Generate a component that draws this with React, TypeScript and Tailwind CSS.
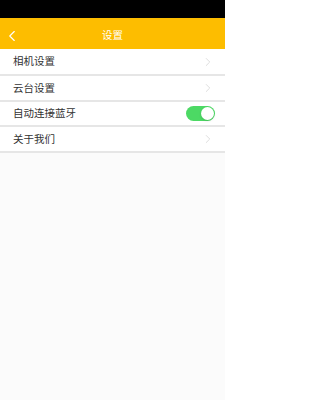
import { ChevronLeft, ChevronRight } from "lucide-react";

const rows = [
  { label: "相机设置", kind: "link", h: "h-[27px]" },
  { label: "云台设置", kind: "link", h: "h-[26px]" },
  { label: "自动连接蓝牙", kind: "toggle", h: "h-[25px]" },
  { label: "关于我们", kind: "link", h: "h-[26px]" },
];

function Toggle() {
  return (
    <div className="w-[29px] h-[15px] rounded-full bg-[#4cd964] flex items-center justify-end px-[1px]">
      <div className="w-[13px] h-[13px] rounded-full bg-white shadow-sm" />
    </div>
  );
}

export default function App() {
  return (
    <div
      className="w-[225px] h-[400px] bg-[#fbfbfb] flex flex-col"
      style={{ fontFamily: '"Noto Sans CJK SC", "Noto Sans", sans-serif' }}
    >
      {/* status bar */}
      <div className="h-[18px] bg-black" />

      {/* header */}
      <header className="h-[31px] pt-[4px] bg-[#fdbd00] relative flex items-center justify-center">
        <ChevronLeft className="absolute left-[3px] w-[18px] h-[18px] text-white" strokeWidth={1.5} />
        <span className="text-white text-[10.5px] leading-none">设置</span>
      </header>

      <div className="flex flex-col">
        {rows.map((r) => (
          <div
            key={r.label}
            className={`${r.h} bg-white border-b-2 border-[#e6e6e6] flex items-center justify-between pl-[13px] pr-[10px]`}
          >
            <span className="text-[10.5px] text-[#333] leading-none">{r.label}</span>
            {r.kind === "toggle" ? (
              <Toggle />
            ) : (
              <ChevronRight className="w-[14px] h-[14px] text-[#d9d9d9]" strokeWidth={1.5} />
            )}
          </div>
        ))}
      </div>
    </div>
  );
}
